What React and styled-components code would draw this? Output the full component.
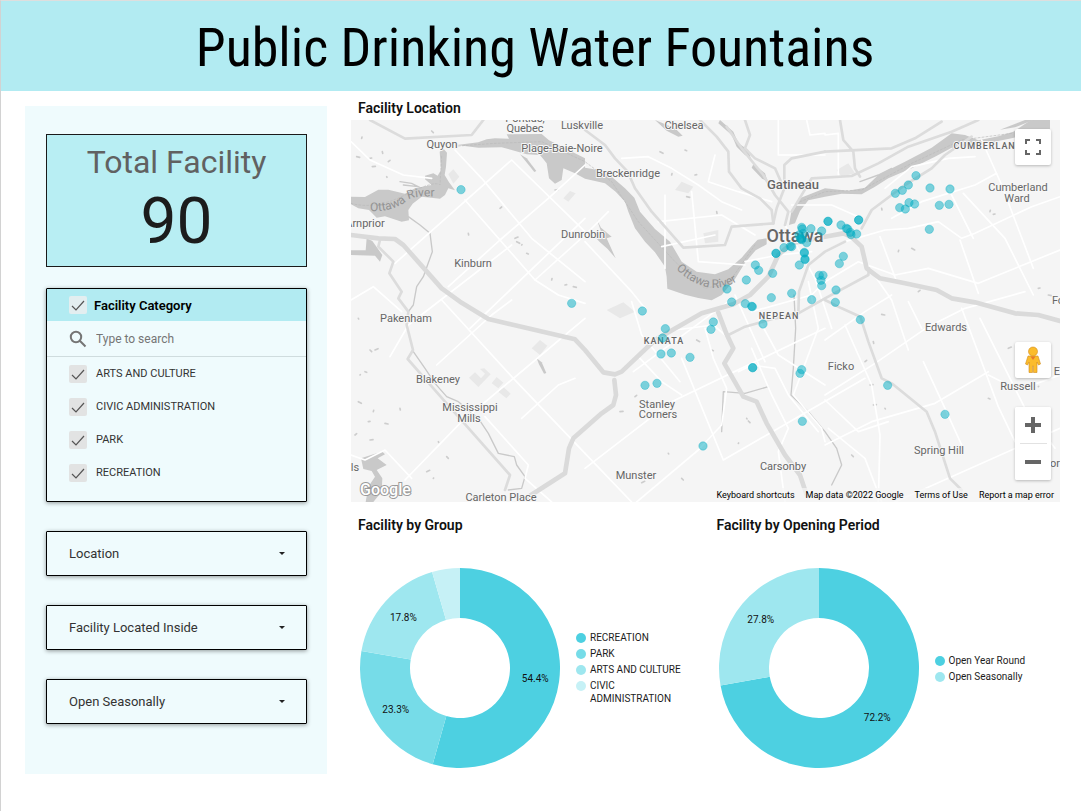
import React from "react";
import styled, { createGlobalStyle } from "styled-components";

const GlobalStyle = createGlobalStyle`
  * { box-sizing: border-box; }
  body { margin: 0; background: #fff; font-family: Roboto, "Liberation Sans", sans-serif; color: #1c1c1c; }
  h1, h2, p, ul { margin: 0; padding: 0; }
  button, input, select { font: inherit; }
`;

const Page = styled.div`
  min-height: 100vh;
  border-top: 1px solid #dedede;
  border-left: 1px solid #d2d2d2;
`;

const Banner = styled.header`
  background: #b2ebf2;
  padding: 14px 12px 10px 0;
  text-align: center;
`;

const Title = styled.h1`
  font-family: "Roboto Condensed", "Liberation Sans Narrow", Roboto, sans-serif;
  font-size: 54px;
  line-height: 66px;
  font-weight: 400;
  color: #000;
`;

const Body = styled.div`
  display: grid;
  grid-template-columns: 302px minmax(0, 1fr);
  gap: 24px;
  padding: 0 21px 0 24px;
`;

const Sidebar = styled.aside`
  margin-top: 15px;
  padding: 28px 20px 50px 21px;
  background: #effbfd;
  display: flex;
  flex-direction: column;
  gap: 29px;
`;

const TotalCard = styled.section`
  height: 133px;
  margin-bottom: -8px;
  border: 1px solid #1a1a1a;
  background: #b8eef3;
  text-align: center;
`;

const TotalLabel = styled.h2`
  font-size: 32px;
  line-height: 36px;
  padding-top: 9px;
  font-weight: 400;
  color: #616161;
`;

const TotalValue = styled.p`
  font-size: 64px;
  line-height: 84px;
`;

const FilterBox = styled.section`
  border: 1px solid #000;
  border-radius: 1px;
  box-shadow: 0 1px 4px rgba(0, 0, 0, 0.4);
  height: 214px;
`;

const FilterHeader = styled.div`
  display: flex;
  align-items: center;
  height: 32px;
  padding-left: 22px;
  background: #b2ebf2;
  color: #000;
  font-size: 13px;
  font-weight: 600;
`;

const SearchRow = styled.label`
  display: flex;
  align-items: center;
  gap: 9px;
  height: 36px;
  padding-left: 22px;
  border-bottom: 1px solid #cfdcde;
`;

const SearchInput = styled.input`
  border: 0;
  outline: 0;
  padding: 0;
  min-width: 0;
  flex: 1;
  background: transparent;
  font-size: 12px;
  color: #333;
  &::placeholder { color: #757575; opacity: 1; }
`;

const Options = styled.ul`
  list-style: none;
  padding-left: 22px;
`;

const Option = styled.li`
  display: flex;
  align-items: center;
  height: 33px;
  font-size: 11px;
  color: #333;
`;

const CheckLabel = styled.label`
  display: flex;
  align-items: center;
  gap: ${(p) => p.$gap}px;
`;

const CheckStack = styled.span`
  display: grid;
  width: 18px;
  height: 18px;
  > * { grid-area: 1 / 1; }
  svg { pointer-events: none; }
`;

const CheckInput = styled.input`
  appearance: none;
  width: 18px;
  height: 18px;
  margin: 0;
  border-radius: 2px;
  background: ${(p) => p.$tone};
`;

const SelectWrap = styled.div`
  display: grid;
  align-items: center;
  height: 45px;
  border: 1px solid #000;
  border-radius: 1px;
  box-shadow: 0 1px 4px rgba(0, 0, 0, 0.4);
  > * { grid-area: 1 / 1; }
  svg { justify-self: end; margin-right: 20px; pointer-events: none; }
`;

const Select = styled.select`
  appearance: none;
  width: 100%;
  height: 43px;
  padding: 0 44px 0 22px;
  border: 0;
  background: transparent;
  font-size: 13px;
  color: #333;
`;

const Main = styled.main`
  min-width: 0;
`;

const PanelTitle = styled.h2`
  padding-left: 7px;
  font-size: 14px;
  line-height: 18px;
  font-weight: 600;
  color: #111;
`;

const MapPanel = styled.section`
  padding-top: 8px;
`;

const MapView = styled.div`
  position: relative;
  margin-top: 3px;
  overflow: hidden;
  > svg { display: block; width: 100%; height: auto; }
`;

const MapControls = styled.div`
  position: absolute;
  right: 9px;
  top: 9px;
  bottom: 22px;
  display: flex;
  flex-direction: column;
`;

const MapButton = styled.button`
  display: grid;
  place-items: center;
  width: 36px;
  height: 36px;
  padding: 0;
  border: 0;
  border-radius: 2px;
  background: #fff;
  box-shadow: ${(p) => (p.$flat ? "none" : "0 1px 3px rgba(0, 0, 0, 0.25)")};
`;

const ZoomGroup = styled.div`
  margin-top: 29px;
  border-radius: 2px;
  background: #fff;
  box-shadow: 0 1px 3px rgba(0, 0, 0, 0.25);
  hr { width: 27px; height: 1px; margin: 0 auto; border: 0; background: #e2e2e2; }
`;

const Spacer = styled.div`
  flex: 1;
`;

const Attribution = styled.div`
  position: absolute;
  right: 0;
  bottom: 0;
  display: flex;
  gap: 11px;
  padding: 0 6px 0 5px;
  background: rgba(245, 245, 245, 0.7);
  font-size: 9px;
  line-height: 14px;
  color: #000;
  a, button { padding: 0; border: 0; background: none; color: inherit; text-decoration: none; }
`;

const Charts = styled.div`
  display: grid;
  grid-template-columns: 1fr 1fr;
  gap: 8px;
  padding-top: 14px;
`;

const ChartBody = styled.div`
  display: flex;
  align-items: center;
  gap: 16px;
  padding: 34px 0 0 9px;
  > svg { flex: none; }
`;

const Legend = styled.ul`
  list-style: none;
  display: grid;
  gap: 3px;
  width: 108px;
  font-size: 10px;
  line-height: 13px;
`;

const LegendItem = styled.li`
  display: flex;
  gap: 4px;
  &::before {
    content: "";
    flex: none;
    width: 10px;
    height: 10px;
    margin-top: 2px;
    border-radius: 50%;
    background: ${(p) => p.$color};
  }
`;

function Check({ label, tone = "#e2e3e3", gap = 9 }) {
  return (
    <CheckLabel $gap={gap}>
      <CheckStack>
        <CheckInput type="checkbox" defaultChecked $tone={tone} />
        <svg width="18" height="18" fill="none" stroke="#555" strokeWidth="1.2">
          <path d="M3 10l4 4 8-9" />
        </svg>
      </CheckStack>
      {label}
    </CheckLabel>
  );
}

function Dropdown({ label }) {
  return (
    <SelectWrap>
      <Select aria-label={label} defaultValue={label}>
        <option>{label}</option>
      </Select>
      <svg width="8" height="6"><path d="M1 1h6L4 4z" fill="#222" /></svg>
    </SelectWrap>
  );
}

/* Terrain paths and pins are in thirds of a pixel of the map. */
const WATER = [
  "M335 150L400 142 425 133 450 130 492 131 485 118 590 117 612 136 660 160 720 190V218L760 225 800 245 840 280 868 308 885 350 930 402 975 440 1010 500 1055 530 1110 538 1150 523 1190 488 1220 453 1238 434 1265 430V448L1232 466 1200 503 1170 552 1130 600 1100 616 1060 609 1020 599 967 581 965 545 960 515 930 472 900 440 870 400 850 350 840 320 812 290 780 265 720 251 690 235 655 220 650 255 630 266 612 250 605 205 585 180 545 178 500 165 470 157 400 158z",
  "M284 170L296 162 306 173 303 215 299 240 312 262 330 286 310 280 300 300 285 311 230 305 203 326 190 345 192 376 170 380 120 364 95 368 72 345 40 340 18 328V305L60 306 100 284 130 284 180 296 210 280 260 270 240 253 240 242 265 235 278 242 288 225z",
  "M1332 390L1340 345 1368 308 1440 280 1510 287 1560 278 1600 240 1680 200 1760 158 1820 115 1860 120 1900 136 1960 124 2005 110 2050 80 2060 75H2115V102L2000 130 1900 150 1820 158 1770 185 1700 220 1630 250 1590 275 1550 298 1490 296 1440 305 1390 316 1365 348 1350 385z",
  "M1965 104L2040 75H2065L2010 97z",
  "M1125 75L1165 110 1180 145 1210 165 1217 190 1200 180 1175 155 1160 120 1120 85z",
  "M1225 208L1260 235 1268 260 1250 250 1220 218z",
  "M65 430L82 438 112 480 105 500 90 482 18 480V466L62 466z",
  "M756 375L768 398 800 425 785 430 812 490 788 462 765 442 752 428 770 415z",
  "M930 75L990 100 1013 122 1000 125 965 107z",
  "M525 178L545 190 574 228 568 231z",
  "M48 1090L85 1078 112 1070 120 1078 98 1090 125 1110 95 1125 112 1150 110 1190 85 1221H62L70 1175 90 1145 80 1128 55 1122z",
  "M575 790L590 802 604 834 597 836 582 808z",
];

const AREAS = [
  "M310 238L325 223 343 245 325 266z",
  "M372 848L390 832 408 850 420 836 405 822 418 820 437 838 400 876z",
  "M440 865L455 846 475 863 460 880zM460 890L475 876 497 896 484 910z",
  "M560 760L585 735 607 752 585 780z",
  "M785 645L835 622 870 650 825 670z",
  "M990 285L1010 260 1045 275 1030 295z",
  "M1075 415L1120 405V440L1080 445z",
  "M655 310L675 288 692 295 670 320z",
  "M1475 225L1510 205 1530 235 1490 245z",
];

const HIGHWAYS = [
  "M18 420L100 430 150 432 175 450 290 580 345 620 430 672 690 733 720 765 775 832 810 838 830 830 930 735 1070 655 1165 628 1215 600 1270 545 1300 480 1340 445 1440 425 1495 415 1518 425 1550 455 1565 520 1605 550 1680 565 1775 585 1820 610 1890 622 2010 655 2080 660 2145 678",
  "M550 1205L660 1135 672 1060 685 1030 770 955 805 930 813 900 808 855",
  "M1120 653L1145 718 1165 760 1138 805 1195 905 1235 920 1265 985 1320 1080 1365 1140 1385 1200",
];

const MINOR_HIGHWAYS = [
  "M1065 75L1115 125 1150 170 1152 230 1190 280 1245 310 1280 345 1285 385",
  "M75 75L180 131 380 120 415 75",
  "M720 105L780 150 810 190 848 230 870 280 920 350 1015 458 1140 450 1160 395 1285 385",
  "M105 435L100 455 145 500 133 535 170 590 160 610 190 650 185 690 204 765 188 792 300 920 495 1140 480 1185",
  "M1145 95L1190 160 1230 210 1255 240 1290 300 1330 350 1320 390",
  "M1285 385L1295 340 1318 280 1318 210 1340 190 1440 170",
  "M1440 170L1640 160 1710 130 1790 80",
  "M1340 350L1400 250 1520 243 1600 205 1690 155 1820 110 1900 75",
  "M1485 75L1495 135 1525 170 1530 220 1545 245",
  "M1550 400L1580 345 1680 270 1760 220 1800 180 1880 125",
  "M1150 720L1200 695 1290 670 1360 655 1440 610 1570 540 1572 520",
  "M1360 655L1362 590 1390 510 1440 470 1500 440",
  "M1440 615L1490 640 1546 665 1570 740 1610 850 1640 865 1745 950 1770 1010 1815 1150 1850 1185",
  "M1200 75L1215 120 1200 160 1230 190 1290 220 1310 265",
];

const ROADS = [
  "M18 140L75 195 175 240 260 250",
  "M150 505L500 195 720 410 M360 315L570 555 640 600 720 625",
  "M310 575L465 435 610 310 720 210 M330 165L410 250 560 430 720 560",
  "M18 615L85 575 170 650 M290 615L505 850 720 1075",
  "M570 555L720 420 790 350 M720 440L860 590 900 640",
  "M135 785L190 690 500 450 M275 810L440 660 500 615",
  "M180 1155L350 980 720 670 M18 1080L60 1095 120 1065 200 1150",
  "M420 965L550 1110 540 1150 620 1221",
  "M375 700L720 370 M530 970L640 870 690 850",
  "M875 1221L1060 1065 1130 990 1145 880 1105 790 1080 700",
  "M720 1075L860 1221 M720 1120L980 920 1440 700",
  "M865 830L1150 620 M880 785L950 860 1010 900",
  "M1010 790L1135 1095 1430 925 1560 850",
  "M990 705L1105 690 1140 720 M860 620L890 720 1005 860",
  "M1180 830L1220 810 1290 820 1330 900 1420 1010",
  "M1220 760L1280 900 1330 1000 1300 1070 1320 1221",
  "M1390 560L1420 700 1345 900 1430 1000 1440 1040",
  "M1170 600L1260 800 M1220 650L1400 600 1440 560",
  "M1240 670L1300 780 1440 870 M1320 390L1410 550 1460 700",
  "M940 380L1130 360 1230 420 M950 455L1110 420",
  "M960 300V520 M1040 290L1060 500 1200 510",
  "M830 190L910 185 980 220 1060 270 1130 320 1190 345",
  "M1110 180L1090 260 1180 290 1280 320",
  "M1300 75V180H1440 M1385 75L1395 120 1440 115 M1440 120L1480 115V240",
  "M1620 280L1700 215 1810 190 1890 185",
  "M1640 370L1730 320 1890 270 1955 235",
  "M1500 440L1620 405 1690 400 1780 380 1850 430 1890 415 2060 335 2145 305",
  "M1810 280L1885 430 M1855 295L1980 430 2065 600",
  "M1910 135L1970 270 2065 520 M1845 435L1900 595",
  "M1440 560L1540 500 1650 540 1750 520 1900 565 2145 465",
  "M1605 425L1655 560 M1560 500L1640 615 1690 765",
  "M1440 900L1590 805 1750 695 1860 640 2040 590",
  "M1440 735L1560 650 1640 600 M1440 1050L1580 980 1770 925 1930 830",
  "M1440 915L1540 1010 1630 980 M1450 1000L1560 1090 1610 1221",
  "M1850 640L1960 935 2010 1040 M1905 670L2040 940 2130 1060",
  "M1735 800L1800 940 1850 1050 M1650 1221L2145 1000",
  "M1500 690L1580 870 1605 1020 1600 1221",
  "M1690 620L1730 700 M1930 840L2020 885 2145 840",
  "M1340 330L1460 330 1550 370 M1200 500L1300 480 1400 470",
];

const RIVERS = [
  "M190 365L225 390 255 415 262 470 235 545 215 575 205 630 190 650",
  "M205 770L240 820 270 865 305 905 340 920 400 970 430 1015 460 1075 508 1085 515 1110 540 1145 530 1180 490 1185",
  "M1347 600L1352 700 1345 820 1338 900 1390 950 1440 1010 1475 1060 1490 1110 1460 1170",
  "M1130 1010L1135 890 1200 895 1270 875",
  "M165 260L200 265 240 285 M175 270L220 275 M1545 260L1600 240 1640 220",
];

const STREAM_DOTS = [
  [50, 130], [75, 190], [35, 185], [112, 170], [130, 200], [82, 215], [125, 245], [260, 108], [510, 430], [530, 450],
  [545, 475], [515, 440], [620, 555], [660, 570], [685, 575], [370, 415], [465, 340], [630, 285], [40, 670], [75, 765],
  [90, 765], [45, 840], [60, 830], [40, 920], [85, 950], [70, 980], [120, 985], [165, 940], [30, 1020], [75, 1035],
  [280, 1040], [305, 1085], [245, 1130], [265, 1150], [1020, 165], [945, 170], [980, 240], [1050, 240], [1025, 305], [1115, 350],
  [870, 905], [825, 950], [970, 1075], [1010, 1150], [890, 1163], [1180, 1045], [1100, 765], [1055, 735], [1935, 350], [1945, 358],
  [1610, 658], [1585, 740], [1560, 800], [1575, 870], [1620, 940], [1520, 1080], [1990, 760], [2080, 875], [1930, 910], [1700, 460],
  [1660, 470], [2080, 580], [2110, 600], [1610, 340], [1720, 590], [1585, 930], [1205, 970], [1210, 978],
];

const PINS = [
  [348, 284], [1370, 397], [1372, 402], [1398, 401], [1430, 408], [1378, 472], [1380, 494], [1363, 510], [1340, 455], [1336, 454],
  [1317, 458], [1293, 475], [1293, 475], [1368, 432], [1370, 434], [1366, 430], [1385, 443], [1378, 474], [1231, 510], [1241, 526],
  [1283, 535], [1204, 555], [1146, 582], [1340, 595], [1279, 608], [1160, 621], [1201, 626], [1222, 635], [1220, 634], [1400, 614],
  [1423, 541], [1434, 541], [1428, 556], [1430, 572], [1375, 415], [1362, 420], [1380, 492], [1713, 242], [1690, 270], [1672, 286],
  [1651, 295], [1755, 279], [1815, 282], [1692, 323], [1709, 327], [1664, 338], [1681, 342], [1783, 331], [1812, 328], [1753, 403],
  [1541, 375], [1541, 375], [1449, 379], [1449, 379], [1488, 390], [1504, 400], [1508, 402], [1516, 412], [1518, 419], [1535, 417],
  [1495, 484], [1483, 506], [1473, 585], [1471, 622], [680, 625], [892, 648], [961, 701], [953, 729], [948, 777], [979, 774],
  [1035, 787], [1105, 681], [1098, 703], [900, 871], [936, 865], [1074, 1053], [1254, 687], [1223, 818], [1223, 818], [1370, 824],
  [1365, 835], [1372, 979], [1546, 674], [1628, 871], [1800, 958],
];

const PLACES = [
  ["Pontiac,", 174, 2], ["Quebec", 174, 12], ["Luskville", 231, 9], ["Chelsea", 333, 9], ["Quyon", 91, 28],
  ["Plage-Baie-Noire", 211, 32], ["Breckenridge", 277, 57], ["Arnprior", 14, 107], ["Dunrobin", 232, 118],
  ["Kinburn", 122, 147], ["Pakenham", 55, 202], ["Blakeney", 87, 263], ["Mississippi", 119, 291], ["Mills", 118, 302],
  ["Stanley", 306, 288], ["Corners", 307, 298], ["Munster", 285, 359], ["Carsonby", 432, 350], ["Carleton Place", 150, 381],
  ["Ficko", 490, 250], ["Edwards", 595, 211], ["Russell", 667, 270], ["Spring Hill", 588, 334], ["Cumberland", 667, 71],
  ["Ward", 666, 82], ["Fo", 707, 184], ["E", 706, 255], ["or", 704, 347], ["ls", 4, 351],
];

function FacilityMap() {
  return (
    <svg viewBox="0 0 709 382" role="img" aria-label="Map of facilities around Ottawa">
      <rect width="709" height="382" fill="#f5f5f5" />
      <g transform="translate(-6 -25) scale(0.33333)" fill="none" strokeLinejoin="round" strokeLinecap="round">
        <g fill="#e8e8e8">{AREAS.map((d) => <path key={d} d={d} />)}</g>
        <g fill="#c9c9c9">{WATER.map((d) => <path key={d} d={d} />)}</g>
        <g stroke="#c9c9c9" strokeWidth="4">{RIVERS.map((d) => <path key={d} d={d} />)}</g>
        <g stroke="#cdcdcd" strokeWidth="5">
          {STREAM_DOTS.map(([x, y], i) => <path key={i} d={`M${x} ${y}l${(i % 3) * 4 + 1} ${(i % 4) * 3 - 4}`} />)}
        </g>
        <path d="M18 325Q90 345 180 300T285 270L290 180M340 153L450 145 590 140 720 200 800 260 880 380 990 500 1080 580 1150 565 1230 450M1365 320L1440 290 1550 285 1700 205 1850 135 2000 115" stroke="#b9b9b9" strokeWidth="2" strokeDasharray="6 6" />
        <g stroke="#fff" strokeWidth="5">{ROADS.map((d) => <path key={d} d={d} />)}</g>
        <g stroke="#dcdcdc" strokeWidth="8">{MINOR_HIGHWAYS.map((d) => <path key={d} d={d} />)}</g>
        <g stroke="#dadada" strokeWidth="14">{HIGHWAYS.map((d) => <path key={d} d={d} />)}</g>
      </g>
      <defs>
        <path id="riverWest" d="M19 91C32 92 46 89 54 82S70 77 100 76" />
        <path id="riverEast" d="M325 149C345 168 372 180 402 148" />
      </defs>
      <g fill="#929292" fontSize="12">
        <text><textPath href="#riverWest">Ottawa River</textPath></text>
        <text><textPath href="#riverEast">Ottawa River</textPath></text>
      </g>
      <g fill="#666" stroke="#f7f7f7" strokeWidth="2" strokeLinejoin="round" paintOrder="stroke" textAnchor="middle" fontSize="11">
        {PLACES.map(([name, x, y]) => <text key={name} x={x} y={y}>{name}</text>)}
        <g letterSpacing="1" fontWeight="500" fontSize="9">
          <text x="313" y="224">KANATA</text>
          <text x="428" y="199">NEPEAN</text>
          <text x="637" y="29">CUMBERLAND</text>
        </g>
        <text x="442" y="69" fontSize="13" fontWeight="500">Gatineau</text>
        <text x="444" y="122" fontSize="18" fontWeight="500">Ottawa</text>
      </g>
      <g transform="translate(-6 -25) scale(0.33333)" fill="#00acc1" fillOpacity="0.5" stroke="#00acc1" strokeOpacity="0.35" strokeWidth="3">
        {PINS.map(([x, y], i) => <circle key={i} cx={x} cy={y} r="12.500" />)}
      </g>
      <text x="9" y="375" fontSize="16" fontWeight="500" fill="#fff" stroke="#9a9a9a" strokeWidth="2" paintOrder="stroke">Google</text>
    </svg>
  );
}

function Pegman() {
  return (
    <svg width="18" height="28" viewBox="0 0 18 28" stroke="#d28b1c" strokeWidth="0.6">
      <path d="M4 10h10l2.500 8-2 1-1.500-3v10.500H9.500V20h-1v6.500H5V16l-1.500 3-2-1z" fill="#fbbc2c" />
      <circle cx="9" cy="5.500" r="4.500" fill="#fbbc2c" />
      <path d="M6.500 10.500h5L9 14z" fill="#e8792c" stroke="none" />
    </svg>
  );
}

const GROUPS = [
  { name: "RECREATION", value: 54.4, color: "#4dd0e1" },
  { name: "PARK", value: 23.3, color: "#76dce8" },
  { name: "ARTS AND CULTURE", value: 17.8, color: "#9ee7ef" },
  { name: "CIVIC ADMINISTRATION", value: 4.5, color: "#c6f1f6", hideLabel: true },
];

const PERIODS = [
  { name: "Open Year Round", value: 72.2, color: "#4dd0e1" },
  { name: "Open Seasonally", value: 27.8, color: "#9ee7ef" },
];

function point(fraction, radius) {
  const a = fraction * 2 * Math.PI;
  return [100 + radius * Math.sin(a), 100 - radius * Math.cos(a)];
}

function Donut({ data, label }) {
  let start = 0;
  return (
    <svg width="200" height="200" role="img" aria-label={label}>
      {data.map((d) => {
        const end = start + d.value / 100;
        const large = d.value > 50 ? 1 : 0;
        const path = `M${point(start, 100)}A100 100 0 ${large} 1 ${point(end, 100)}L${point(end, 50)}A50 50 0 ${large} 0 ${point(start, 50)}Z`;
        const [x, y] = point((start + end) / 2, 76);
        start = end;
        return (
          <g key={d.name}>
            <path d={path} fill={d.color} />
            {!d.hideLabel && <text x={x} y={y + 4} textAnchor="middle" fontSize="10" fill="#111">{d.value}%</text>}
          </g>
        );
      })}
    </svg>
  );
}

function ChartPanel({ title, data }) {
  return (
    <section>
      <PanelTitle>{title}</PanelTitle>
      <ChartBody>
        <Donut data={data} label={title} />
        <Legend>
          {data.map((d) => <LegendItem key={d.name} $color={d.color}><span>{d.name}</span></LegendItem>)}
        </Legend>
      </ChartBody>
    </section>
  );
}

export default function App() {
  return (
    <Page>
      <GlobalStyle />
      <Banner><Title>Public Drinking Water Fountains</Title></Banner>
      <Body>
        <Sidebar>
          <TotalCard>
            <TotalLabel>Total Facility</TotalLabel>
            <TotalValue>90</TotalValue>
          </TotalCard>
          <FilterBox>
            <FilterHeader><Check label="Facility Category" tone="#e3eef0" gap={7} /></FilterHeader>
            <SearchRow>
              <svg width="18" height="18" viewBox="0 0 18 18" fill="none" stroke="#757575" strokeWidth="2">
                <circle cx="7" cy="7" r="5.200" />
                <path d="M10.800 10.800L16.500 16.500" />
              </svg>
              <SearchInput type="text" placeholder="Type to search" aria-label="Type to search" />
            </SearchRow>
            <Options>
              {["ARTS AND CULTURE", "CIVIC ADMINISTRATION", "PARK", "RECREATION"].map((name) => (
                <Option key={name}><Check label={name} /></Option>
              ))}
            </Options>
          </FilterBox>
          <Dropdown label="Location" />
          <Dropdown label="Facility Located Inside" />
          <Dropdown label="Open Seasonally" />
        </Sidebar>
        <Main>
          <MapPanel>
            <PanelTitle>Facility Location</PanelTitle>
            <MapView>
              <FacilityMap />
              <MapControls>
                <MapButton type="button" aria-label="Toggle fullscreen view">
                  <svg width="16" height="16" fill="none" stroke="#666" strokeWidth="2">
                    <path d="M1 5V1H5M11 1H15V5M15 11V15H11M5 15H1V11" />
                  </svg>
                </MapButton>
                <Spacer />
                <MapButton type="button" aria-label="Street View"><Pegman /></MapButton>
                <ZoomGroup>
                  <MapButton type="button" $flat aria-label="Zoom in">
                    <svg width="16" height="16" stroke="#666" strokeWidth="4"><path d="M0 8H16M8 0V16" /></svg>
                  </MapButton>
                  <hr />
                  <MapButton type="button" $flat aria-label="Zoom out">
                    <svg width="16" height="16" stroke="#666" strokeWidth="4"><path d="M0 8H16" /></svg>
                  </MapButton>
                </ZoomGroup>
              </MapControls>
              <Attribution>
                <button type="button">Keyboard shortcuts</button>
                <span>Map data ©2022 Google</span>
                <a href="#terms">Terms of Use</a>
                <a href="#report">Report a map error</a>
              </Attribution>
            </MapView>
          </MapPanel>
          <Charts>
            <ChartPanel title="Facility by Group" data={GROUPS} />
            <ChartPanel title="Facility by Opening Period" data={PERIODS} />
          </Charts>
        </Main>
      </Body>
    </Page>
  );
}
